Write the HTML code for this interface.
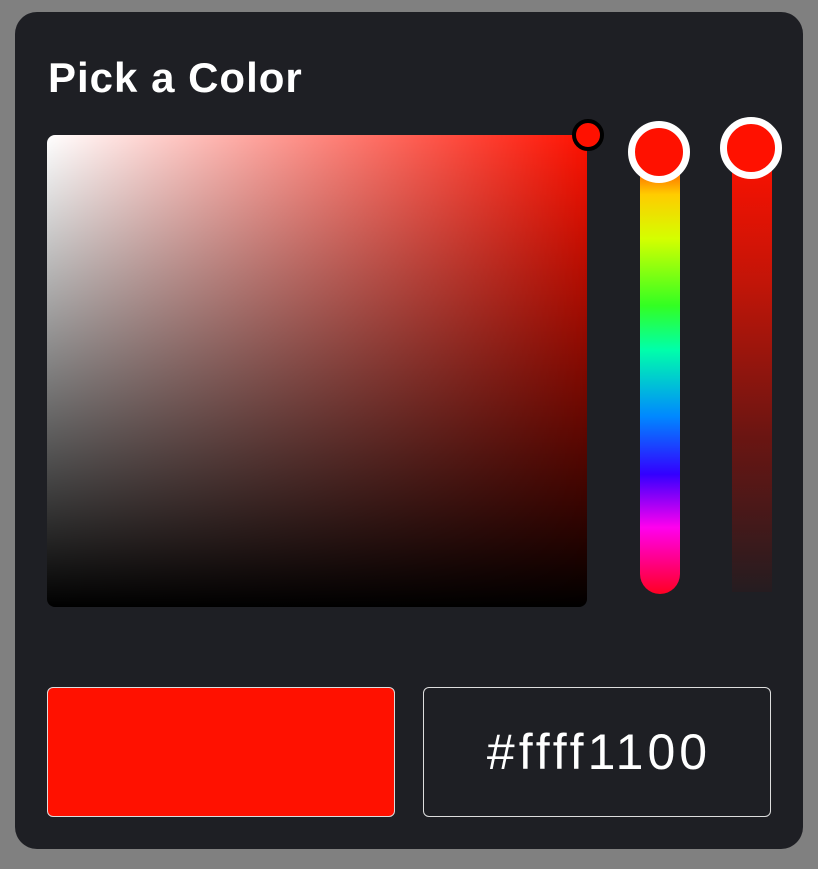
<!DOCTYPE html>
<html><head><style>
body{margin:0;width:818px;height:869px;background:#808080;position:relative;overflow:hidden;font-family:"Liberation Sans",sans-serif}
.card{position:absolute;left:15px;top:12px;width:788px;height:837px;background:#1e1f24;border-radius:22px}
h1{position:absolute;left:48px;top:54px;margin:0;color:#fff;font-size:42px;font-weight:bold;line-height:48px;letter-spacing:1px}
.sv{position:absolute;left:47px;top:135px;width:540px;height:472px;border-radius:8px;background:linear-gradient(to top,#000,rgba(0,0,0,0)),linear-gradient(to right,#fff,#ff1100)}
.svt{position:absolute;left:572px;top:119px;width:24px;height:24px;border:4px solid #000;border-radius:50%;background:#ff1100}
.hue{position:absolute;left:640px;top:150px;width:40px;height:444px;border-radius:20px;background:linear-gradient(to bottom,#ff1100 0%,#ffcc00 10%,#d4ff00 20%,#33ff22 35%,#00ffaa 45%,#0088ff 60%,#3300ff 73%,#ff00ee 85%,#ff0022 100%)}
.alpha{position:absolute;left:732px;top:150px;width:40px;height:442px;background:linear-gradient(to bottom,#ff1100,#c21508 30%,#6a1512 65%,#251c20)}
.th{position:absolute;width:48px;height:48px;border:7px solid #fff;border-radius:50%;background:#ff1100}
.sw{position:absolute;left:47px;top:687px;width:346px;height:128px;border:1px solid #ddd;border-radius:6px;background:#ff1100}
.tx{position:absolute;left:423px;top:687px;width:346px;height:128px;border:1px solid #ddd;border-radius:6px;color:#fff;font-size:50px;line-height:128px;text-align:center;letter-spacing:4px;text-indent:4px}
</style></head><body>
<div class="card"></div>
<h1>Pick a Color</h1>
<div class="sv"></div>
<div class="svt"></div>
<div class="hue"></div>
<div class="alpha"></div>
<div class="th" style="left:628px;top:121px"></div>
<div class="th" style="left:720px;top:117px"></div>
<div class="sw"></div>
<div class="tx">#ffff1100</div>
</body></html>
